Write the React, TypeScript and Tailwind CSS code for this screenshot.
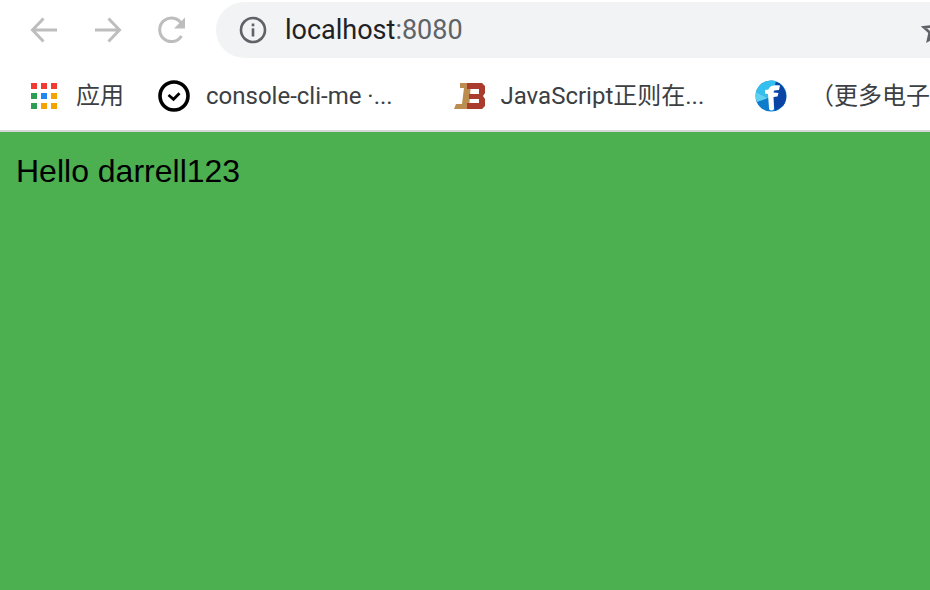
const chromeFont = "font-['Roboto','Noto_Sans_CJK_SC',sans-serif]";

function BackIcon() {
  return (
    <svg width="30" height="30" viewBox="0 0 30 30" fill="none" stroke="#bdbdbd" strokeWidth="3">
      <path d="M28 15H3.5M14.5 3.5 3.5 15l11 11.5" />
    </svg>
  );
}

function ForwardIcon() {
  return (
    <svg width="30" height="30" viewBox="0 0 30 30" fill="none" stroke="#bdbdbd" strokeWidth="3">
      <path d="M2 15h24.5M15.5 3.5 26.5 15l-11 11.5" />
    </svg>
  );
}

function ReloadIcon() {
  return (
    <svg width="30" height="30" viewBox="0 0 30 30" fill="none">
      <path d="M24.5 21a11.8 11.8 0 1 1 .3-12" stroke="#bdbdbd" strokeWidth="3" />
      <path d="M28 2.500v11H17z" fill="#bdbdbd" />
    </svg>
  );
}

function InfoIcon() {
  return (
    <svg width="28" height="28" viewBox="0 0 28 28" fill="none">
      <circle cx="14" cy="14" r="12" stroke="#5f6368" strokeWidth="2.600" />
      <rect x="12.700" y="7.500" width="2.600" height="2.800" fill="#5f6368" />
      <rect x="12.700" y="12.300" width="2.600" height="8.200" fill="#5f6368" />
    </svg>
  );
}

function StarIcon() {
  return (
    <svg width="28" height="28" viewBox="0 0 28 28" fill="none" className="shrink-0">
      <path d="M14 3l3.300 7.400 8 .8-6 5.400 1.700 7.900-7-4-7 4 1.700-7.900-6-5.400 8-.8z" stroke="#5f6368" strokeWidth="2.600" />
    </svg>
  );
}

function AppsIcon() {
  const colors = ["#f03a32", "#f03a32", "#f03a32", "#2f9e55", "#2385f0", "#f5a300", "#2f9e55", "#f5a300", "#f5a300"];
  return (
    <div className="grid grid-cols-3 gap-[4px] w-[26px] shrink-0">
      {colors.map((c, i) => (
        <div key={i} className="w-[6px] h-[6px]" style={{ backgroundColor: c }} />
      ))}
    </div>
  );
}

function ConsoleIcon() {
  return (
    <svg width="32" height="32" viewBox="0 0 32 32" fill="none" stroke="#000" className="shrink-0">
      <circle cx="16" cy="16" r="14" strokeWidth="3.600" />
      <path d="M10.500 15l5 4.300 6-6" strokeWidth="2.800" />
    </svg>
  );
}

function JbIcon() {
  return (
    <svg width="34" height="32" viewBox="0 0 34 32" className="shrink-0">
      <path d="M4 24h6l2-16h-4V3h11l-2 26H2z" fill="#bd8c50" />
      <path d="M15 3h15l3 3v7l-2 3 2 3v7l-3 3H15v-6h12v-4H17v-5h10V9H15z" fill="#a93c2c" />
    </svg>
  );
}

function FlutterLikeIcon() {
  return (
    <svg width="32" height="32" viewBox="0 0 32 32" className="shrink-0">
      <circle cx="16" cy="16" r="15.500" fill="#0d7ccb" />
      <path d="M16 0.500A15.500 15.500 0 0 0 1 12l14 7 6-18z" fill="#35bfee" />
      <path d="M1 12a15.500 15.500 0 0 0 1 10l11-4z" fill="#5ed0f0" />
      <path d="M21 2a15.500 15.500 0 0 1 7 24L20 31l-2-12z" fill="#0a45a5" />
      <path d="M14 28l-1-14-3-.5v-3.500l3.500-.5C15 5 20 5 25 5.500L24 10l-5 .5-.5 2 5 .5-1 3.500-4 .5 .5 11a2.500 2.500 0 0 1-5 0z" fill="#fff" />
    </svg>
  );
}

export default function App() {
  return (
    <div className={`w-[930px] h-[590px] overflow-hidden flex flex-col bg-[#4caf50] ${chromeFont}`}>
      <div className="h-[65px] shrink-0 bg-white flex items-start">
        <div className="h-[60px] flex items-center pl-[29px]">
          <BackIcon />
          <div className="ml-[34px]"><ForwardIcon /></div>
          <div className="ml-[34px]"><ReloadIcon /></div>
        </div>
        <div className="ml-[29px] mt-[2px] h-[56px] flex-1 min-w-0 bg-[#f1f3f4] rounded-l-[28px] flex items-center pl-[23px] overflow-hidden">
          <InfoIcon />
          <div className="ml-[18px] text-[27px] leading-none text-[#202124]">
            localhost<span className="text-[#5f6368]">:8080</span>
          </div>
          <div className="ml-auto mr-[-19px]"><StarIcon /></div>
        </div>
      </div>

      <div className="h-[65px] shrink-0 bg-white flex items-center pb-[3px] text-[24px] leading-none text-[#3c4043] whitespace-nowrap">
        <div className="ml-[31px]"><AppsIcon /></div>
        <span className="ml-[19px]">应用</span>
        <div className="ml-[34px]"><ConsoleIcon /></div>
        <span className="ml-[16px] w-[212px] overflow-hidden">console-cli-me ·...</span>
        <div className="ml-[38px]"><JbIcon /></div>
        <span className="ml-[15px] w-[212px] overflow-hidden">JavaScript正则在...</span>
        <div className="ml-[47px]"><FlutterLikeIcon /></div>
        <span className="ml-[23px]">（更多电子</span>
      </div>

      <div className="h-[2px] shrink-0 bg-[#d4d6d8]" />

      <div className="flex-1 px-4 py-[19px] text-[32px] leading-[40px] text-black font-['Liberation_Sans',sans-serif]">
        Hello darrell123
      </div>
    </div>
  );
}
